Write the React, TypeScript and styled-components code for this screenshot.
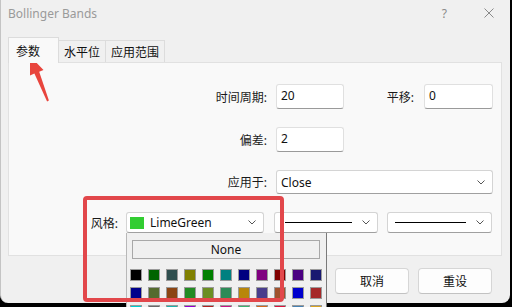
import { FunctionComponent } from 'react';
import styled, { createGlobalStyle } from 'styled-components';

const FONT = `'Noto Sans', 'Noto Sans CJK SC', sans-serif`;

const GlobalStyle = createGlobalStyle`
  html, body {
    margin: 0;
    padding: 0;
    background: #000;
  }
  body {
    font-family: ${FONT};
    font-size: 12px;
    color: #1a1a1a;
  }
`;

const PALETTE = [
  ['#000000', '#006400', '#2F4F4F', '#808000', '#008000', '#008080', '#000080', '#800080', '#800000', '#4B0082', '#191970'],
  ['#00008B', '#556B2F', '#8B4513', '#228B22', '#6B8E23', '#2E8B57', '#B8860B', '#483D8B', '#A0522D', '#0000CD', '#A52A2A'],
  ['#00CED1', '#696969', '#20B2AA', '#9400D3', '#B22222', '#C71585', '#3CB371', '#D2691E', '#DC143C', '#4682B4', '#DAA520'],
];

const Screen = styled.div`
  position: relative;
  width: 512px;
  height: 307px;
  overflow: hidden;
  background: #000;
`;

const Window = styled.div`
  width: 510px;
  height: 303px;
  background: #f0f0f0;
  border-left: 1px solid #c4c4c4;
  box-sizing: border-box;
  border-radius: 0 0 8px 8px;
  display: flex;
  flex-direction: column;
`;

const TitleBar = styled.div`
  height: 26px;
  display: flex;
  align-items: center;
  justify-content: space-between;
  padding: 0 16px 0 7px;
`;

const Title = styled.span`
  font-size: 12px;
  color: #9a9a9a;
`;

const TitleButtons = styled.div`
  display: flex;
  align-items: center;
  gap: 37px;
  color: #8a8a8a;
  font-size: 12px;
`;

const Body = styled.div`
  padding: 11px 8px 0 7px;
  display: flex;
  flex-direction: column;
`;

const TabStrip = styled.div`
  display: flex;
  align-items: flex-end;
  height: 25px;
`;

const Tab = styled.div<{ $active?: boolean }>`
  box-sizing: border-box;
  height: ${({ $active }) => ($active ? '26px' : '22px')};
  margin-bottom: ${({ $active }) => ($active ? '-1px' : '0')};
  padding: ${({ $active }) => ($active ? '0 18px 0 7px' : '0 5px')};
  display: flex;
  align-items: center;
  background: ${({ $active }) => ($active ? '#f9f9f9' : '#f0f0f0')};
  border: 1px solid #dcdcdc;
  border-bottom: none;
  border-left: ${({ $active }) => ($active ? '1px solid #dcdcdc' : 'none')};
  z-index: ${({ $active }) => ($active ? 1 : 0)};
  font-size: 12px;
  color: #111;
`;

const Panel = styled.div`
  box-sizing: border-box;
  height: 194px;
  background: #f9f9f9;
  border: 1px solid #e1e1e1;
  padding-top: 21px;
  display: flex;
  flex-direction: column;
  gap: 18px;
`;

const Row = styled.div<{ $indent?: number }>`
  display: flex;
  align-items: center;
  padding-left: ${({ $indent }) => $indent ?? 0}px;
`;

const Label = styled.span<{ $w: number; $pad?: number }>`
  width: ${({ $w }) => $w}px;
  padding-right: ${({ $pad }) => $pad ?? 9}px;
  text-align: right;
  font-size: 12px;
  color: #1a1a1a;
  white-space: nowrap;
`;

const Field = styled.div<{ $w: number; $h?: number }>`
  box-sizing: border-box;
  width: ${({ $w }) => $w}px;
  height: ${({ $h }) => $h ?? 25}px;
  background: #fff;
  border: 1px solid #e0e0e0;
  border-bottom-color: #9a9a9a;
  border-radius: 3px;
  padding: 0 0 2px 4px;
  display: flex;
  align-items: center;
  font-size: 12px;
  color: #111;
`;

const Select = styled(Field)`
  padding: 0 7px 0 4px;
  gap: 6px;
  border-color: #d4d4d4;
  border-bottom-color: #a0a0a0;
`;

const SelectText = styled.span`
  flex: 1;
`;

const Swatch = styled.span<{ $color: string }>`
  width: 14px;
  height: 12px;
  margin-left: -1px;
  background: ${({ $color }) => $color};
`;

const LinePreview = styled.span<{ $lead: number }>`
  flex: 1;
  height: 1px;
  margin: 0 4px 0 ${({ $lead }) => $lead}px;
  background: #000;
`;

const Chevron = styled.svg`
  width: 8px;
  height: 5px;
  flex-shrink: 0;
`;

const Spacer = styled.span<{ $w: number }>`
  width: ${({ $w }) => $w}px;
  flex-shrink: 0;
`;

const ButtonRow = styled.div`
  display: flex;
  justify-content: flex-end;
  gap: 9px;
  margin-top: 12px;
  padding-right: 10px;
`;

const Button = styled.div`
  box-sizing: border-box;
  width: 74px;
  height: 26px;
  background: #fdfdfd;
  border: 1px solid #d6d6d6;
  border-bottom-color: #c2c2c2;
  border-radius: 4px;
  display: flex;
  align-items: center;
  justify-content: center;
  font-size: 12px;
  color: #111;
`;

const Popup = styled.div`
  position: absolute;
  left: 126px;
  top: 233px;
  width: 201px;
  height: 80px;
  box-sizing: border-box;
  background: #f0f0f0;
  border-left: 1px solid #b8b8b8;
  border-right: 1px solid #7a7a7a;
  padding: 7px 0 0 5px;
`;

const NoneButton = styled.div`
  box-sizing: border-box;
  width: 188px;
  height: 19px;
  border: 1px solid #a8a8a8;
  display: flex;
  align-items: center;
  justify-content: center;
  font-size: 12px;
  color: #111;
`;

const SwatchGrid = styled.div`
  margin: 10px 0 0 -2px;
  display: grid;
  grid-template-columns: repeat(11, 12px);
  gap: 6px;
`;

const ColorCell = styled.span<{ $color: string }>`
  box-sizing: border-box;
  width: 12px;
  height: 12px;
  background: ${({ $color }) => $color};
  border: 1px solid #9a9a9a;
`;

const Highlight = styled.div`
  position: absolute;
  left: 83px;
  top: 196px;
  width: 201px;
  height: 106px;
  box-sizing: border-box;
  border: 4px solid #e2474b;
  border-radius: 4px;
`;

const Arrow = styled.svg`
  position: absolute;
  left: 0;
  top: 0;
  width: 80px;
  height: 120px;
`;

const Down: FunctionComponent = () => (
  <Chevron viewBox="0 0 8 5">
    <path d="M0.5 0.5 L4 4 L7.5 0.5" stroke="#555" strokeWidth="1" fill="none" />
  </Chevron>
);

const App: FunctionComponent = () => (
  <Screen>
    <GlobalStyle />
    <Window>
      <TitleBar>
        <Title>Bollinger Bands</Title>
        <TitleButtons>
          <span>?</span>
          <svg width="10" height="10" viewBox="0 0 10 10">
            <path d="M0.5 0.5 L9.5 9.5 M9.5 0.5 L0.5 9.5" stroke="#8a8a8a" strokeWidth="1" />
          </svg>
        </TitleButtons>
      </TitleBar>
      <Body>
        <TabStrip>
          <Tab $active>参数</Tab>
          <Tab>水平位</Tab>
          <Tab>应用范围</Tab>
        </TabStrip>
        <Panel>
          <Row>
            <Label $w={258}>时间周期:</Label>
            <Field $w={68}>20</Field>
            <Label $w={70} $pad={10}>平移:</Label>
            <Field $w={69}>0</Field>
          </Row>
          <Row>
            <Label $w={258}>偏差:</Label>
            <Field $w={68}>2</Field>
          </Row>
          <Row>
            <Label $w={258}>应用于:</Label>
            <Select $w={217} $h={24}>
              <SelectText>Close</SelectText>
              <Down />
            </Select>
          </Row>
          <Row $indent={80}>
            <Label $w={29} $pad={8}>风格:</Label>
            <Select $w={138} $h={21}>
              <Swatch $color="#32CD32" />
              <SelectText>LimeGreen</SelectText>
              <Down />
            </Select>
            <Spacer $w={10} />
            <Select $w={104} $h={21}>
              <LinePreview $lead={6} />
              <Down />
            </Select>
            <Spacer $w={9} />
            <Select $w={105} $h={21}>
              <LinePreview $lead={3} />
              <Down />
            </Select>
          </Row>
        </Panel>
        <ButtonRow>
          <Button>取消</Button>
          <Button>重设</Button>
        </ButtonRow>
      </Body>
    </Window>
    <Popup>
      <NoneButton>None</NoneButton>
      <SwatchGrid>
        {PALETTE.flat().map((c, i) => (
          <ColorCell key={i} $color={c} />
        ))}
      </SwatchGrid>
    </Popup>
    <Highlight />
    <Arrow viewBox="0 0 80 120">
      <polygon
        points="30,56 43.5,70 39.2,71.8 48.9,100.6 47.1,101.4 34.4,73.6 30,75.5"
        fill="#e8453d"
      />
    </Arrow>
  </Screen>
);

export default App;
